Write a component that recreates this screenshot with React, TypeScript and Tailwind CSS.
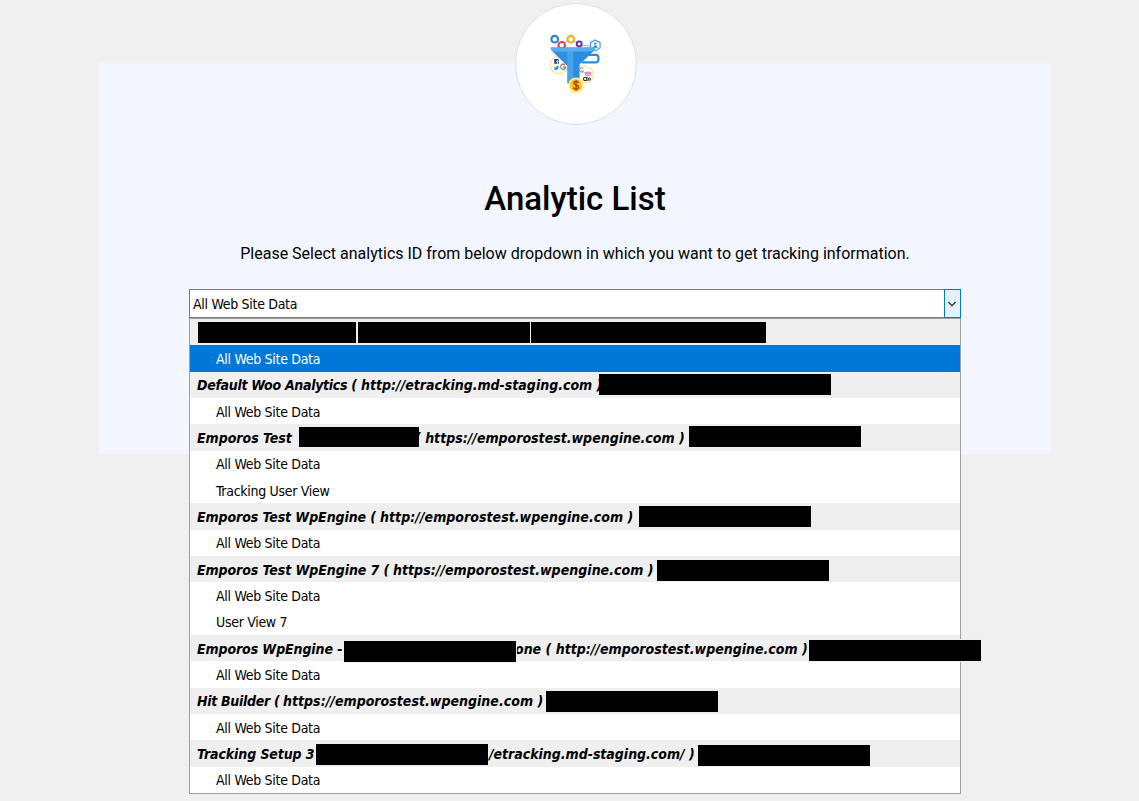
import React from "react";

type Piece =
  | { kind: "text"; text: string; className: string }
  | { kind: "bar"; className: string };

type Row =
  | { kind: "option"; text: string; selected?: boolean }
  | { kind: "group"; pieces: Piece[] };

const text = (value: string, className: string): Piece => ({ kind: "text", text: value, className });
const bar = (className: string): Piece => ({ kind: "bar", className });
const option = (value: string, selected = false): Row => ({ kind: "option", text: value, selected });
const group = (...pieces: Piece[]): Row => ({ kind: "group", pieces });

const rows: Row[] = [
  group(
    bar("ml-[1px] mt-[3px] h-[21px] w-[158px]"),
    bar("ml-[2px] mt-[3px] h-[21px] w-[172px]"),
    bar("ml-[1px] mt-[3px] h-[21px] w-[235px]"),
  ),
  option("All Web Site Data", true),
  group(
    text("Default Woo Analytics (", "w-[164px] tracking-[-0.3px]"),
    text("http://etracking.md-staging.com )", "w-[237px]"),
    bar("relative z-10 ml-[1px] mt-[2px] h-[21px] w-[232px]"),
  ),
  option("All Web Site Data"),
  group(
    text("Emporos Test", "w-[101px] tracking-[-0.02px]"),
    bar("relative z-10 ml-[1px] mt-[3px] h-5 w-[120px]"),
    text("( https://emporostest.wpengine.com )", "-ml-[4px] w-[274px]"),
    bar("mt-[2px] h-[21px] w-[172px]"),
  ),
  option("All Web Site Data"),
  option("Tracking User View"),
  group(
    text("Emporos Test WpEngine (", "w-[183px] tracking-[-0.08px]"),
    text("http://emporostest.wpengine.com )", "w-[259px] tracking-[0.04px]"),
    bar("mt-[3px] h-[21px] w-[172px]"),
  ),
  option("All Web Site Data"),
  group(
    text("Emporos Test WpEngine 7 (", "w-[196px] tracking-[-0.07px]"),
    text("https://emporostest.wpengine.com )", "w-[264px] tracking-[0.03px]"),
    bar("mt-1 h-[21px] w-[172px]"),
  ),
  option("All Web Site Data"),
  option("User View 7"),
  group(
    text("Emporos WpEngine -", "w-[147px] tracking-[-0.1px]"),
    bar("relative z-10 mt-1.5 h-[21px] w-[172px] ring-1 ring-[#efefef]"),
    text("one ( http://emporostest.wpengine.com )", "-ml-px w-[294px]"),
    bar("relative z-10 mt-[5px] h-[21px] w-[172px] ring-1 ring-[#efefef]"),
  ),
  option("All Web Site Data"),
  group(
    text("Hit Builder (", "w-[86px] tracking-[-0.3px]"),
    text("https://emporostest.wpengine.com )", "w-[263px] tracking-[0.02px]"),
    bar("mt-[3px] h-[21px] w-[172px]"),
  ),
  option("All Web Site Data"),
  group(
    text("Tracking Setup 3", "w-[119px] tracking-[-0.1px]"),
    bar("mt-1 h-[21px] w-[172px]"),
    text("/etracking.md-staging.com/ )", "pl-px w-[210px] tracking-[-0.02px]"),
    bar("mt-[5px] h-[21px] w-[172px]"),
  ),
  option("All Web Site Data"),
];

function FunnelLogo() {
  return (
    <svg className="-mt-0.5" width="70" height="70" viewBox="0 0 70 70" fill="none" aria-hidden="true">
      <path d="M18 13.5 20 15M24.5 15 28 12.5M34 12.5l3 2M42 17.5l9 .5" stroke="#8fb9dd" strokeWidth="1" />
      <circle cx="14.7" cy="11.2" r="3.3" stroke="#2d86d2" strokeWidth="2.2" />
      <circle cx="30.8" cy="11.2" r="3.3" stroke="#f2b022" strokeWidth="2.2" />
      <circle cx="21.7" cy="17.3" r="3.3" stroke="#dc4940" strokeWidth="2.2" />
      <circle cx="39.2" cy="16" r="2.4" stroke="#7a2bab" strokeWidth="2" />
      <path d="m55.3 12 4.8 2.6v5.4l-4.8 2.8-4.8-2.8v-5.4z" stroke="#4c9dd9" strokeWidth="1.2" fill="#f5fbff" />
      <circle cx="55.3" cy="15.6" r="1.2" fill="#3a8dd2" />
      <path d="M53.1 20c.2-3.6 4.2-3.6 4.4 0z" fill="#3a8dd2" />
      <path d="M46 26.8h10c3.4 0 3.4 7.6 0 7.6H42" stroke="#2d8ddd" strokeWidth="2.2" />
      <circle cx="19" cy="37" r="8.8" fill="#fffef2" stroke="#fae9a2" strokeWidth="1.4" />
      <circle cx="45" cy="46.5" r="8.4" fill="#fffef2" stroke="#fae9a2" strokeWidth="1.4" />
      <rect x="14.2" y="31" width="4.8" height="4.8" rx=".5" fill="#27427f" />
      <path d="M17.5 35.8v-3c0-.8.5-1 1.2-1M16 33.6h2.6" stroke="#fff" strokeWidth=".8" />
      <path d="M14 38.5c1 1.1 1.7 1.2 2.2 1.1-.2-1.7 1.1-2.2 2-1.4l1-.2-.6 1c-.2 3-3 4-4.8 2.8l1.3-.5c-.8-.6-1.3-1.8-1.1-2.8z" fill="#2996dc" />
      <path d="M25 37.1a2.4 2.4 0 0 0-4.2.6" stroke="#df5547" strokeWidth="1.1" />
      <path d="M20.8 37.7c-.7 2 .7 3.6 2.2 3.6" stroke="#45a566" strokeWidth="1.1" />
      <path d="M23 41.3c1.8 0 2.5-1 2.5-2.3H23" stroke="#4379ce" strokeWidth="1.1" />
      <path d="M10.7 19.4h44.6c0 2-1 3.2-2 4L39.5 36.5V53L33 58l-5.7-3V38L13 24c-1.5-1.5-2.3-2.4-2.3-4.6z" fill="#2f92e3" />
      <path d="M10.7 19.4h44.6c0 1.8-.5 3-1.6 4H12.7c-1.4-1-2-2.2-2-4z" fill="#5aaeed" />
      <path d="M27.3 23.4H33v34l-5.7-3z" fill="#62b4f0" opacity=".5" />
      <path d="M34 23.4h19L39.5 36.5V53l-5.5 4z" fill="#177bd0" opacity=".2" />
      <path d="M43.3 40.5a2.1 2.1 0 1 0 .3 2.5h-2M43.8 44.2l1 1" stroke="#777" strokeWidth=".9" />
      <rect x="45.2" y="43.8" width="6" height="3.9" fill="#d177b4" />
      <path d="M46 45h4.5M46 46.5h4.5" stroke="#f5cce6" strokeWidth=".7" />
      <circle cx="45.2" cy="51" r="1.7" stroke="#252525" strokeWidth="1.1" />
      <path d="M47 49.3h1M47.3 52.5h1.2" stroke="#252525" strokeWidth=".7" />
      <circle cx="49.3" cy="51" r="1.2" stroke="#252525" strokeWidth="1" />
      <circle cx="36" cy="57.3" r="7.8" fill="#ffef85" />
      <circle cx="36" cy="57.3" r="6" fill="#fcc324" />
      <path d="M38.6 55c-.4-2.2-4.7-2.1-4.8.1-.1 2.6 4.9 1.5 4.9 4.1 0 2.5-4.9 2.5-5.2.1M36.1 52v10.4" stroke="#a54018" strokeWidth="1.3" />
    </svg>
  );
}

function ListRow({ row, index }: { row: Row; index: number }) {
  const height = index % 3 === 1 ? "h-[27px]" : "h-[26px]";
  const leading = index % 3 === 2 ? "leading-[26px]" : "leading-[28px]";
  if (row.kind === "option") {
    const colors = row.selected ? "bg-[#0078d7] text-white" : "bg-white text-black";
    return (
      <li className={`${height} ${colors} ${leading} pl-[26px] text-[14px] tracking-[-0.3px]`}>
        {row.text}
      </li>
    );
  }
  return (
    <li className={`${height} ${leading} flex bg-[#efefef] pl-[7px] text-[14px] font-bold italic text-black`}>
      {row.pieces.map((piece, i) =>
        piece.kind === "bar" ? (
          <span key={i} className={`shrink-0 bg-black ${piece.className}`} />
        ) : (
          <span key={i} className={`shrink-0 whitespace-pre ${piece.className}`}>
            {piece.text}
          </span>
        ),
      )}
    </li>
  );
}

export default function App() {
  return (
    <main className="h-[801px] overflow-hidden bg-[#f0f0f0] pl-[99px] pt-[63px] font-['Roboto',sans-serif] text-black">
      <section className="flex h-[391px] w-[952px] flex-col items-center rounded-[2px] bg-[#f3f6ff]">
        <div className="-mt-[60px] ml-0.5 flex h-[122px] w-[122px] shrink-0 items-center justify-center rounded-full border border-[#d5e3ef] bg-white pr-0.5">
          <FunnelLogo />
        </div>
        <h1 className="mt-[54px] text-[33px] leading-10 font-medium">Analytic List</h1>
        <p className="mt-[23px] text-[16px] leading-6">
          Please Select analytics ID from below dropdown in which you want to get tracking information.
        </p>
        <div className="relative mt-[23px] w-[772px] font-['DejaVu_Sans_Condensed','DejaVu_Sans',sans-serif]">
          <div className="flex h-[29px] border border-[#7a7a7a] border-r-0 bg-white">
            <span className="flex-1 pl-[3px] text-[14px] leading-[29px] tracking-[-0.3px]">All Web Site Data</span>
            <span className="-my-px flex w-[17px] items-center justify-center border border-[#0078d7] bg-[#e5f1fb] pr-px">
              <svg width="8" height="6" viewBox="0 0 8 6" fill="none" aria-hidden="true">
                <path d="m.4 1 3.6 3.6L7.6 1" stroke="#222" strokeWidth="1.2" />
              </svg>
            </span>
          </div>
          <ul className="absolute top-[29px] left-0 w-[772px] border border-[#a0a0a0]">
            {rows.map((row, i) => (
              <ListRow key={i} row={row} index={i} />
            ))}
          </ul>
        </div>
      </section>
    </main>
  );
}
